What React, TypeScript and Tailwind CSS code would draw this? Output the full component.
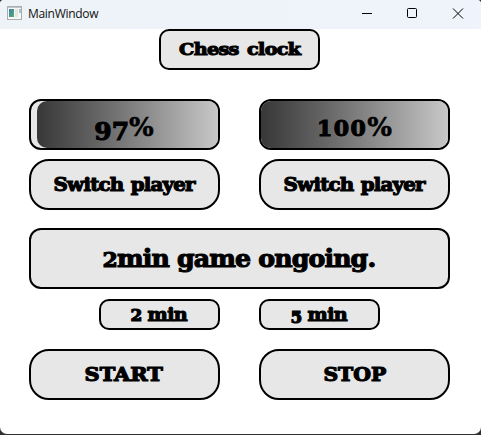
import type { ReactNode } from "react";

const face =
  "flex items-center justify-center whitespace-nowrap border-2 border-black bg-[#e7e7e7] font-['DejaVu_Serif',serif] font-bold text-black [-webkit-text-stroke:1.1px_black]";

function Box({ className, children }: { className: string; children: ReactNode }) {
  return <div className={`${face} ${className}`}>{children}</div>;
}

function PushButton({ className, children }: { className: string; children: ReactNode }) {
  return (
    <button type="button" className={`${face} ${className}`}>
      {children}
    </button>
  );
}

function TitleBar() {
  return (
    <header className="flex h-[29px] items-center bg-linear-to-r from-[#edf3f7] to-[#eff3fb] pl-[7px]">
      <svg width="16" height="14" viewBox="0 0 16 14" className="-mt-[3px]" shapeRendering="crispEdges">
        <defs>
          <linearGradient id="pane" x1="0" y1="0" x2="1" y2="1">
            <stop offset="0" stopColor="#397fb0" />
            <stop offset="1" stopColor="#55b06d" />
          </linearGradient>
        </defs>
        <rect x="0.5" y="0.5" width="14" height="13" fill="#f7f7f7" stroke="#a9adb0" />
        <rect x="1" y="1" width="13" height="1" fill="#c3c6c9" />
        <rect x="2" y="3" width="5" height="8" fill="url(#pane)" />
        <rect x="8" y="3" width="3" height="8" fill="#e4e4e2" />
        <rect x="12" y="3" width="2" height="4" fill="#a2c6c4" />
      </svg>
      <span className="-mt-px ml-[5px] font-['Open_Sans',sans-serif] text-[12px] leading-4 tracking-[-0.3px] text-[#111]">MainWindow</span>
      <div className="ml-auto -mt-[3px] flex h-4 items-center">
        <svg width="120" height="16" viewBox="0 0 120 16" fill="none" stroke="#000">
          <path d="M1 8.5h10" />
          <rect x="46.5" y="3.5" width="9" height="9" rx="1" />
          <path d="M92 3.5l10 10M102 3.5l-10 10" />
        </svg>
      </div>
    </header>
  );
}

export default function App() {
  return (
    <div className="h-[435px] w-[481px] overflow-hidden bg-[#302f31]">
      <div className="h-[434px] overflow-hidden rounded-t-[4px] rounded-b-[7px] bg-white">
        <TitleBar />
        <main className="flex flex-col">
          <Box className="ml-[159px] h-[41px] w-[161px] rounded-[10px] text-[17px] tracking-[-0.6px]">
            <span className="scale-x-[1.13] [word-spacing:2px]">Chess clock</span>
          </Box>

          <div className="mt-[29px] ml-[29px] flex gap-[39px]">
            <Box className="h-[51px] w-[191px] rounded-[12px] pl-[6px]">
              <div className="flex h-full w-full items-baseline justify-center rounded-[10px] bg-linear-to-r from-[#383838] to-[#c8c8c8] pt-[7px] pr-[7px]">
                <span className="relative top-[4px] text-[25px]">97</span>
                <span className="text-[26px] [-webkit-text-stroke:0.5px_black]">%</span>
              </div>
            </Box>
            <Box className="h-[51px] w-[191px] rounded-[12px]">
              <div className="flex h-full w-full items-baseline justify-center rounded-[10px] bg-linear-to-r from-[#383838] to-[#c8c8c8] pt-[7px]">
                <span className="text-[22px] tracking-[1.4px]">100</span>
                <span className="text-[26px] [-webkit-text-stroke:0.5px_black]">%</span>
              </div>
            </Box>
          </div>

          <div className="mt-[9px] ml-[29px] flex gap-[39px]">
            <PushButton className="h-[51px] w-[191px] rounded-[20px] text-[18px] tracking-[-0.7px]">
              <span className="scale-x-110 [word-spacing:1px]">Switch player</span>
            </PushButton>
            <PushButton className="h-[51px] w-[191px] rounded-[20px] text-[18px] tracking-[-0.7px]">
              <span className="scale-x-110 [word-spacing:1px]">Switch player</span>
            </PushButton>
          </div>

          <Box className="mt-[18px] ml-[29px] h-[61px] w-[421px] rounded-[12px] pt-[1px] pr-[2px] text-[24px] tracking-[-0.8px]">
            <span className="scale-x-[1.05]"><span className="text-[21px]">2</span>min game ongoing.</span>
          </Box>

          <div className="mt-[10px] ml-[99px] flex gap-[39px]">
            <PushButton className="h-[31px] w-[121px] rounded-[10px] pr-[2px] text-[18px] tracking-[-0.6px]">
              <span className="scale-x-[1.06]"><span className="text-[16px]">2</span> min</span>
            </PushButton>
            <PushButton className="h-[31px] w-[121px] rounded-[10px] pr-[2px] text-[18px] tracking-[-0.6px]">
              <span className="scale-x-[1.06]"><span className="relative top-[2px] text-[16px]">5</span> min</span>
            </PushButton>
          </div>

          <div className="mt-[19px] ml-[29px] flex gap-[39px]">
            <PushButton className="h-[51px] w-[191px] rounded-[20px] pr-[2px] text-[18px]">
              <span className="scale-x-[1.16]">START</span>
            </PushButton>
            <PushButton className="h-[51px] w-[191px] rounded-[20px] text-[18px]">
              <span className="scale-x-[1.13]">STOP</span>
            </PushButton>
          </div>
        </main>
      </div>
    </div>
  );
}
